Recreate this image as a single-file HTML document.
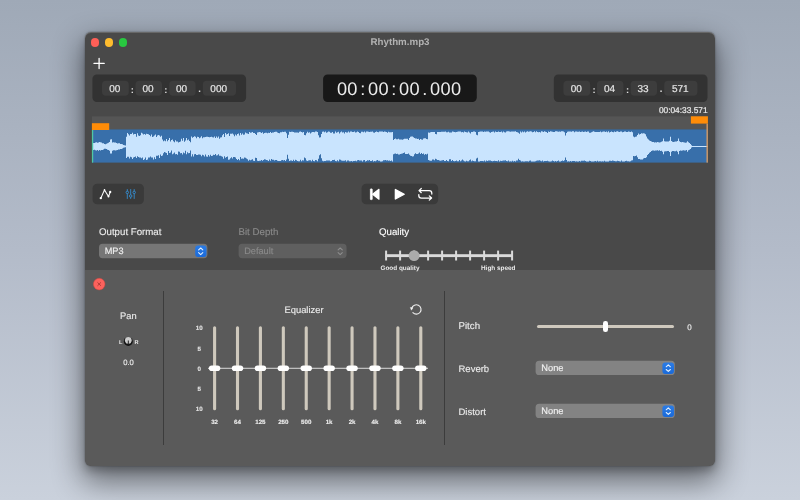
<!DOCTYPE html>
<html><head><meta charset="utf-8"><title>Rhythm.mp3</title>
<style>
*{box-sizing:border-box;margin:0;padding:0}
html,body{width:800px;height:500px;overflow:hidden}
body{font-family:"Liberation Sans",sans-serif;color:#e6e6e6;position:relative;text-rendering:geometricPrecision;
background:linear-gradient(180deg,#9fa9b7 0%,#b3bbc9 50%,#cad1dc 100%);}
.abs,.win div,.win svg{position:absolute}
.shadow{position:absolute;left:85px;top:32px;width:630px;height:434px;border-radius:6px;
box-shadow:0 13px 30px 3px rgba(0,0,0,.48),0 5px 9px rgba(0,0,0,.22),0 0 1.5px rgba(0,0,0,.5)}
.win{position:absolute;left:0;top:0;width:800px;height:500px;will-change:transform}
.wbg{left:85px;top:32px;width:630px;height:434px;border-radius:6px;background:#494949;overflow:hidden;
box-shadow:inset 0 1px 0 rgba(255,255,255,.17)}
.panel{left:0;top:238px;width:630px;height:196px;background:#5a5a5a}
.tl{width:8.8px;height:8.8px;border-radius:50%;top:38px}
.title{left:300px;width:200px;top:37.3px;text-align:center;font-size:9.75px;font-weight:bold;color:#b2b2b2;line-height:12px}
.tbox{top:74.4px;width:153.5px;height:27.5px}
.tf{top:6.7px;height:14.9px;color:#e4e4e4;font-size:10px;line-height:17.1px;text-align:center;padding-right:1px;-webkit-text-stroke:.2px #e4e4e4}
.ts{top:10.2px;width:6px;text-align:center;color:#e0e0e0;font-size:9.4px;font-weight:bold;line-height:10px}
.big{left:323.3px;top:74.5px;width:153.7px;height:27.5px;color:#ececec;font-size:18.2px;line-height:28.4px;text-align:center;letter-spacing:.35px;word-spacing:-3.05px;white-space:pre;padding-right:2px}
.dur{left:600px;width:107.6px;top:105.2px;text-align:right;font-size:8.35px;color:#ececec;line-height:10px;-webkit-text-stroke:.2px #ececec}
.band{left:92px;top:116px;width:616px;height:14px;background:#555}
.wave{left:92px;top:130px;width:616px;height:32.5px;background:#3a6fb2}
.tb{top:183.6px;height:20.7px;border-radius:4.5px;background:#3a3a3a}
.lab{font-size:9.7px;line-height:12px;color:#ececec;white-space:nowrap;-webkit-text-stroke:.12px currentColor}
.sel{height:14px;border-radius:3.5px;font-size:9.2px;line-height:15.6px;padding-left:5.7px;-webkit-text-stroke:.15px currentColor;color:#f0f0f0;white-space:nowrap}
.selb{width:11.5px;height:12px;border-radius:3px;background:#2a74dc;right:1px;top:1px}
.qt{top:250.4px;width:2px;height:10.3px;background:#dadada}
.ql{font-size:6.4px;font-weight:bold;line-height:9px;color:#ededed;top:263.8px;white-space:nowrap}
.div{width:1px;top:291px;height:154px;background:#3c3c3c}
.eqt{top:326.5px;width:3px;height:84px;border-radius:1.5px;background:#cfc9be}
.eqk{top:365.3px;width:11.4px;height:6px;border-radius:3px;background:#fff}
.eql{top:417.7px;width:30px;text-align:center;-webkit-text-stroke:.12px currentColor;font-size:6.2px;font-weight:bold;line-height:9px;color:#eee}
.eqs{left:189.3px;width:20px;text-align:center;-webkit-text-stroke:.12px currentColor;font-size:6.2px;font-weight:bold;line-height:10px;color:#e4e4e4}
</style></head><body>
<div class="shadow"></div>
<div class="win">
<div class="wbg"><div class="panel"></div></div>
<div class="tl" style="left:90.6px;background:#fe5f57"></div>
<div class="tl" style="left:104.6px;background:#febc2e"></div>
<div class="tl" style="left:118.6px;background:#28c840"></div>
<div class="title">Rhythm.mp3</div>
<svg style="left:92px;top:56px" width="14" height="14" viewBox="0 0 14 14"><path d="M7.1 2.3V12.5M2 7.4H12.2" stroke="#fff" stroke-width="1.3" fill="none" stroke-linecap="round"/></svg>
<svg style="left:0;top:0" width="800" height="500" viewBox="0 0 800 500"><g fill="#323232"><rect x="92.4" y="74.5" width="153.7" height="27.5" rx="4.5"/><rect x="553.8" y="74.5" width="153.7" height="27.5" rx="4.5"/></g><rect x="323.1" y="74.5" width="153.7" height="27.5" rx="4.5" fill="#181818"/><g fill="#3d3d3d"><rect x="102.0" y="80.8" width="26.8" height="15" rx="4"/><rect x="135.5" y="80.8" width="26.5" height="15" rx="4"/><rect x="169.2" y="80.8" width="26.4" height="15" rx="4"/><rect x="202.8" y="80.8" width="33.2" height="15" rx="4"/><rect x="563.4" y="80.8" width="26.8" height="15" rx="4"/><rect x="596.9" y="80.8" width="26.5" height="15" rx="4"/><rect x="630.6" y="80.8" width="26.4" height="15" rx="4"/><rect x="664.2" y="80.8" width="33.2" height="15" rx="4"/></g></svg>
<div class="tbox" style="left:92.2px"><div class="tf" style="left:9.5px;width:27px">00</div><div class="tf" style="left:43.0px;width:26.5px">00</div><div class="tf" style="left:76.5px;width:26.5px">00</div><div class="tf" style="left:110.5px;width:33px">000</div><div class="ts" style="left:37.2px">:</div><div class="ts" style="left:70.7px">:</div><div class="ts" style="left:104.3px;top:11px;font-size:9.5px">.</div></div>
<div class="big">00 : 00 : 00 . 000</div>
<div class="tbox" style="left:553.8px"><div class="tf" style="left:9.5px;width:27px">00</div><div class="tf" style="left:43.0px;width:26.5px">04</div><div class="tf" style="left:76.5px;width:26.5px">33</div><div class="tf" style="left:110.5px;width:33px">571</div><div class="ts" style="left:37.2px">:</div><div class="ts" style="left:70.7px">:</div><div class="ts" style="left:104.3px;top:11px;font-size:9.5px">.</div></div>
<div class="dur">00:04:33.571</div>
<svg style="left:0;top:0" width="800" height="500" viewBox="0 0 800 500">
<rect x="92" y="116.4" width="616" height="13.2" fill="#555"/>
<rect x="92" y="129.4" width="616" height="33.2" fill="#386faa"/>
<path transform="translate(92 130.1)" d="M0 12.8V12.8H1V12.9H2V13H3V12.5H4V12.2H5V12.6H6V12.3H7V12H8V12.1H9V12.3H10V13.2H11V13.1H12V13.8H13V14.2H14V13.6H15V13.2H16V12.7H17V12H18V9.4H19V9.2H20V12.4H21V12.1H22V12.3H23V12.4H24V12.8H25V13.4H26V13.2H27V13.2H28V13.9H29V14H30V14.2H31V14.9H32V15.2H33V15.4H34V6.7H35V3H36V4.2H37V5.4H38V3.8H39V3.8H40V2.6H41V4.5H42V4H43V4H44V6.7H45V3.2H46V5.5H47V5.8H48V5.2H49V2.6H50V3.4H51V4.5H52V3.9H53V4.6H54V3.6H55V3.8H56V4.2H57V5H58V6.2H59V4.3H60V6.8H61V6.5H62V5.4H63V4.4H64V6.9H65V5.4H66V5H67V5.3H68V6.7H69V5.7H70V9.5H71V11.1H72V10.3H73V11.2H74V9H75V11.1H76V9.8H77V7.8H78V11.3H79V9.9H80V9.5H81V11.2H82V12.1H83V10.1H84V11.5H85V11.5H86V12.5H87V11.9H88V11.3H89V8.6H90V10.7H91V8H92V11.6H93V10.3H94V8H95V10.2H96V9.4H97V11H98V12.2H99V6.3H100V7.6H101V6.9H102V6.2H103V6.6H104V8.2H105V6.6H106V7H107V8.1H108V7.5H109V6.2H110V8.2H111V7.1H112V7.1H113V6.9H114V6.6H115V6.6H116V6.9H117V7.2H118V6.8H119V6.6H120V7.1H121V7.3H122V6.5H123V7.8H124V6.3H125V7.6H126V6.5H127V8.7H128V7.3H129V7.1H130V5.2H131V3.9H132V6.8H133V3H134V4.3H135V4H136V3.1H137V6H138V3.6H139V3.6H140V3.4H141V4.3H142V6.2H143V4.3H144V5.4H145V4H146V3.5H147V5.5H148V2.9H149V4.6H150V3.4H151V4.7H152V4.4H153V2.4H154V3.2H155V3.4H156V3.9H157V1.9H158V2.6H159V2.4H160V2H161V3H162V3H163V3.8H164V4.8H165V2.4H166V2.2H167V1.9H168V2.1H169V2.9H170V2.2H171V3.7H172V2.8H173V2.6H174V2.6H175V3.2H176V2.6H177V3H178V1.9H179V3H180V2.4H181V2.5H182V1.8H183V1.7H184V1.6H185V2.5H186V3H187V3.1H188V2.2H189V2.2H190V1.6H191V1.8H192V1.7H193V1.6H194V3.2H195V8H196V4.7H197V1.6H198V1.8H199V1.6H200V1.6H201V2H202V2.5H203V2.4H204V2.3H205V2.5H206V2.6H207V1.6H208V1.5H209V1.8H210V2.5H211V1.8H212V4.9H213V5.1H214V3.2H215V1.7H216V2.7H217V2.2H218V3.3H219V2.3H220V1.8H221V1.8H222V2.2H223V1.5H224V1.5H225V2H226V5.1H227V7.5H228V7.1H229V3.9H230V1.7H231V1.5H232V2.2H233V1.4H234V2.7H235V2.1H236V1.5H237V1.6H238V2.7H239V2.6H240V1.8H241V3.5H242V3.4H243V1.4H244V2.7H245V2.2H246V1.6H247V3.3H248V2.2H249V1.3H250V2.4H251V2.1H252V3.3H253V2H254V2.5H255V2.3H256V1.5H257V2.5H258V1.4H259V1.5H260V1.9H261V2H262V1.3H263V2.5H264V2.2H265V1.4H266V1.9H267V2.9H268V3.1H269V1.6H270V1.6H271V2.1H272V1.5H273V2.4H274V1.4H275V1.3H276V1.7H277V1.8H278V1.6H279V1.6H280V1.5H281V2.3H282V2.6H283V1.8H284V1.4H285V2H286V2.1H287V1.3H288V1.4H289V1.4H290V1.3H291V1.9H292V1.4H293V1.6H294V2H295V2.6H296V1.6H297V2.1H298V2.2H299V2.2H300V1.8H301V9.8H302V9H303V8.5H304V9.2H305V9.2H306V8.7H307V9.5H308V9.3H309V9.5H310V9.6H311V9.2H312V8.7H313V8.7H314V8.6H315V8.6H316V9.8H317V7.9H318V6.7H319V6.3H320V6.3H321V7.2H322V7.8H323V8.4H324V8.5H325V8.8H326V8.7H327V10H328V8.8H329V9.5H330V9.6H331V8.4H332V8.1H333V8.1H334V8.9H335V9.1H336V2.4H337V2.6H338V2.2H339V1.8H340V1.8H341V1.8H342V2H343V3.9H344V4.2H345V1.8H346V1.9H347V1.9H348V1.9H349V1.7H350V1.6H351V1.6H352V1.6H353V1.5H354V2.2H355V2.1H356V1.7H357V2.5H358V2.5H359V2.3H360V1.5H361V1.6H362V1.8H363V2.1H364V1.8H365V1.6H366V1.4H367V1.4H368V1.5H369V2.2H370V2H371V2.4H372V1.4H373V2H374V2.2H375V2.4H376V1.4H377V2.4H378V3.5H379V1.8H380V1.8H381V1.3H382V1.3H383V1.9H384V4.7H385V5.2H386V1.8H387V1.6H388V1.5H389V1.4H390V1.4H391V1.8H392V1.3H393V1.6H394V1.3H395V1.4H396V1.3H397V2.1H398V2.6H399V2H400V1.6H401V1.4H402V2.3H403V1.3H404V1.9H405V1.9H406V1.5H407V1.9H408V1.8H409V1.3H410V2.3H411V1.5H412V2.1H413V2.4H414V1.5H415V1.2H416V1.2H417V1.3H418V1.6H419V1.3H420V1.3H421V1.4H422V1.5H423V1.2H424V1.9H425V2.2H426V2.7H427V3.6H428V1.5H429V2.3H430V1.4H431V2.2H432V1.3H433V2.3H434V1.7H435V1.2H436V1.7H437V1.5H438V1.2H439V1.3H440V2.1H441V2H442V1.2H443V2.1H444V1.2H445V2H446V2.1H447V1.8H448V2.3H449V1.2H450V1.3H451V1.8H452V1.2H453V1.6H454V1.9H455V2.9H456V1.3H457V2H458V1.2H459V1.3H460V1.7H461V1.8H462V1.8H463V1.2H464V1.2H465V1.3H466V1.7H467V1.5H468V1.6H469V1.2H470V1.2H471V1.4H472V2.1H473V5.3H474V2.8H475V1.7H476V1.4H477V1.5H478V1.3H479V1.7H480V1.2H481V1.1H482V2.1H483V1.5H484V1.5H485V1.6H486V1.6H487V1.3H488V1.8H489V1.6H490V1.4H491V1.8H492V1.6H493V1.3H494V1.9H495V1.4H496V1.3H497V2.6H498V2.6H499V2.1H500V1.6H501V1.2H502V1.6H503V1.8H504V1.8H505V1.9H506V1.9H507V1.8H508V1.3H509V2.1H510V1.7H511V1.3H512V1.5H513V2H514V1.3H515V2.1H516V1.2H517V2.4H518V1.9H519V1.5H520V1.9H521V2.1H522V1.5H523V2H524V1.3H525V1.2H526V1.7H527V1.9H528V1.5H529V1.5H530V2.1H531V1.9H532V1.3H533V1.3H534V2H535V1.8H536V1.5H537V1.7H538V1.9H539V1.5H540V2.2H541V6.5H542V7.2H543V6.7H544V6.4H545V5H546V3.4H547V4.4H548V3.9H549V3.2H550V3.5H551V3.2H552V3.3H553V4.1H554V6.5H555V8.3H556V9.5H557V10.4H558V10.8H559V11.3H560V11.8H561V12H562V12.3H563V12.1H564V12.4H565V11.9H566V12.1H567V12.3H568V12.1H569V11.7H570V11.1H571V8.4H572V11.1H573V11.4H574V11.4H575V11.4H576V11.4H577V10.6H578V6.7H579V10.8H580V11.6H581V11.8H582V11.7H583V11.5H584V11.5H585V11H586V8.4H587V11.2H588V11.8H589V12.2H590V12H591V12.1H592V12.3H593V12.7H594V12.4H595V11.1H596V12.1H597V13H598V13.9H599V15.2H600V15.8H601V15.8H602V15.8H603V15.8H604V15.8H605V15.8H606V15.8H607V15.8H608V15.8H609V15.8H610V15.8H611V15.8H612V15.8H613V15.8H614V15.8H615V15.8H616V16.8H615V16.8H614V16.8H613V16.8H612V16.8H611V16.8H610V16.8H609V16.8H608V16.8H607V16.8H606V16.8H605V16.8H604V16.8H603V16.8H602V16.8H601V16.8H600V17.4H599V18.8H598V19.6H597V20.2H596V21.6H595V19.9H594V20.3H593V20.4H592V20.2H591V20.3H590V20.7H589V20.4H588V21H587V24.2H586V21.6H585V20.7H584V21.2H583V21.1H582V20.9H581V20.9H580V21.6H579V25.9H578V21.9H577V20.8H576V20.8H575V21.2H574V21.2H573V21.5H572V24.2H571V21.7H570V20.6H569V20.9H568V20.2H567V20.6H566V20.1H565V20.3H564V20.5H563V20.6H562V20.3H561V20.5H560V20.9H559V22H558V22.6H557V23.9H556V24.8H555V27.1H554V27.8H553V27.9H552V28.5H551V29.4H550V29.3H549V29.3H548V28.9H547V29H546V27.1H545V25.3H544V25.9H543V26.1H542V25.8H541V30.2H540V30.4H539V31.2H538V31.3H537V31.1H536V31.1H535V30.6H534V30.9H533V31.3H532V31.3H531V31.4H530V30.4H529V31.3H528V31.1H527V31H526V30.6H525V31.2H524V31.2H523V30.8H522V30.6H521V30.5H520V30.8H519V30.6H518V30.7H517V31.3H516V31.4H515V31.3H514V31.3H513V30.6H512V31.4H511V31.2H510V31.4H509V31.2H508V31.2H507V31.3H506V30.6H505V31.4H504V31H503V31.1H502V31.5H501V31.5H500V31.4H499V30.8H498V30.7H497V31.4H496V31.3H495V31.4H494V31H493V30.5H492V30.6H491V30.7H490V30.7H489V31.3H488V31H487V31.5H486V31.3H485V31.1H484V31.4H483V30.9H482V30.8H481V31H480V31.5H479V30.8H478V31.5H477V31.1H476V31.5H475V29.9H474V27.3H473V30.1H472V31H471V30.5H470V30.9H469V31.4H468V31.4H467V30.4H466V30.9H465V31.5H464V30.9H463V31.4H462V31H461V30.5H460V31.1H459V31.3H458V31.4H457V31.2H456V30.6H455V30.9H454V30.9H453V30.8H452V31.4H451V30.5H450V31.1H449V30.7H448V30.2H447V30.5H446V30.4H445V30.6H444V31.1H443V31.4H442V31.4H441V31.4H440V31.4H439V30.5H438V30.6H437V31.3H436V31.2H435V31.2H434V31.1H433V31.4H432V31.3H431V31.1H430V31.3H429V30.5H428V30H427V28.7H426V30.5H425V30.5H424V31.4H423V31H422V31.3H421V30.7H420V31.4H419V31.1H418V31.3H417V30.4H416V31.2H415V30.8H414V30.1H413V30.4H412V30.3H411V30.6H410V30.9H409V30.6H408V31.3H407V30.2H406V31.1H405V31H404V30.9H403V30.7H402V30.9H401V31.2H400V30.9H399V30.4H398V30.4H397V30.4H396V30.8H395V30.3H394V31.3H393V30.3H392V31.1H391V31H390V30.8H389V31H388V31.3H387V31.3H386V27.7H385V28.3H384V31.2H383V31.2H382V30.9H381V30.5H380V31.1H379V29.3H378V30.2H377V31.2H376V31.1H375V30.6H374V31.3H373V31.2H372V30.4H371V29.3H370V30.4H369V31.2H368V29.9H367V31.1H366V31.1H365V30.3H364V30.8H363V31.1H362V30.8H361V30H360V30.8H359V29.2H358V29.1H357V31.1H356V31H355V30H354V31H353V30.9H352V29.9H351V30.2H350V30.5H349V30.7H348V30.4H347V29.9H346V29.9H345V29.2H344V28.6H343V30.1H342V29.5H341V29.5H340V30.7H339V30.6H338V30.3H337V30H336V23.7H335V24.4H334V24H333V24.7H332V23.4H331V23.8H330V23H329V23.8H328V22.4H327V23.3H326V23.9H325V23.9H324V23.1H323V24.2H322V26.1H321V26.5H320V26H319V25.6H318V24.7H317V23.4H316V23.9H315V24H314V23.9H313V22.4H312V22.8H311V23.4H310V23.7H309V23.9H308V24.3H307V24.3H306V23.7H305V23.9H304V23.5H303V23.6H302V24.2H301V31.3H300V30.3H299V30.9H298V30.5H297V30.6H296V30.2H295V30.5H294V30H293V30.2H292V30.2H291V31.1H290V31.3H289V31.3H288V30.7H287V30.7H286V29.8H285V30.4H284V31.2H283V31H282V31.3H281V30.1H280V30.9H279V30.8H278V29.9H277V30.4H276V30.1H275V30.8H274V31.3H273V30H272V30.2H271V31.3H270V30.5H269V30.4H268V30.5H267V30H266V30.2H265V31.1H264V30.6H263V30.9H262V30.8H261V31.3H260V31H259V31.2H258V31.2H257V30.4H256V30.4H255V31.3H254V30.2H253V30.6H252V30.7H251V30.7H250V30.3H249V29.6H248V29.3H247V31.1H246V30.2H245V31.1H244V31H243V29.7H242V29.8H241V30H240V30.9H239V31.1H238V30.4H237V30.5H236V30.4H235V30.5H234V30.9H233V30.8H232V31.1H231V30.6H230V28.1H229V24.1H228V25.1H227V28.6H226V31.1H225V30.1H224V30H223V31.1H222V30.8H221V29.7H220V31.1H219V30.1H218V30.1H217V30.5H216V30.8H215V30.4H214V28.2H213V27.4H212V30.5H211V30.2H210V31.1H209V29.6H208V31.1H207V31.1H206V30.9H205V30.1H204V29.6H203V30.9H202V29.7H201V30.8H200V30.5H199V30.3H198V31H197V28.6H196V24.7H195V29.4H194V31H193V29.9H192V30.3H191V29.9H190V30.2H189V30.9H188V31H187V30.8H186V30.7H185V29.8H184V30H183V30.3H182V29.6H181V29.6H180V29H179V30.7H178V29.4H177V30.9H176V30.1H175V29.9H174V29.5H173V29.1H172V29.8H171V30.7H170V30H169V30.6H168V30.7H167V30.8H166V30.6H165V27.9H164V27.7H163V30.9H162V30.6H161V29.2H160V29.7H159V30.2H158V29.7H157V30.6H156V29.1H155V28.4H154V27.7H153V27.4H152V28.6H151V28.3H150V28.7H149V26.9H148V30.1H147V29H146V29.9H145V29H144V27.4H143V27H142V27H141V28.5H140V27.1H139V28.2H138V29.4H137V29.6H136V26.5H135V26.9H134V27.7H133V26.1H132V28.6H131V26.7H130V26.2H129V25.7H128V25.7H127V24.1H126V25.1H125V25.4H124V23.9H123V24.8H122V24.6H121V25.6H120V26H119V24.7H118V26.3H117V24.8H116V26.6H115V26.3H114V24.4H113V26.3H112V25.1H111V24.7H110V26.1H109V24.7H108V24.4H107V24.4H106V25H105V25H104V24H103V24.1H102V26.5H101V24.2H100V26.3H99V20.4H98V22.8H97V23.2H96V22.1H95V24.2H94V20.7H93V23.1H92V22.3H91V24.3H90V22.8H89V23.2H88V21.6H87V21.4H86V24.6H85V23.8H84V24.1H83V22.5H82V23.3H81V24.2H80V20.5H79V22.4H78V22.8H77V20.8H76V24.9H75V22.8H74V22.5H73V21.8H72V23.1H71V25.3H70V25.9H69V24.5H68V28H67V25.2H66V25.6H65V25.7H64V28.8H63V27.1H62V29.4H61V27.3H60V27.4H59V26.5H58V27.5H57V27.3H56V29.5H55V30H54V27.4H53V29.2H52V29.9H51V27.4H50V28.2H49V27.4H48V27.3H47V27H46V26.1H45V27.9H44V26.3H43V26.9H42V27.3H41V29H40V27.2H39V26.7H38V28.4H37V26.7H36V26.6H35V27.8H34V17.2H33V17.4H32V17.7H31V18.4H30V18.8H29V18.8H28V19.4H27V19.5H26V19.8H25V20.1H24V20.3H23V20.1H22V20.1H21V20.7H20V23.5H19V23.5H18V20.6H17V20H16V19.7H15V18.8H14V18.6H13V18.7H12V19.4H11V19.9H10V19.9H9V20.3H8V19.9H7V20.6H6V20H5V20.4H4V20.1H3V19.6H2V20H1V19.7H0Z" fill="#c9e4fe"/>
<rect x="91.9" y="123.2" width="17.3" height="6.8" fill="#ff8c08"/>
<rect x="91.9" y="130" width="1.3" height="32.6" fill="#4fc9a4"/>
<rect x="690.9" y="116.3" width="17" height="7.3" fill="#ff8c08"/>
<rect x="706.5" y="123.6" width="1.35" height="39" fill="#d99a5e"/>
</svg>

<svg style="left:0;top:0" width="800" height="500" viewBox="0 0 800 500">
<rect x="92.6" y="183.8" width="51.3" height="20.4" rx="4.5" fill="#3a3a3a"/>
<rect x="361.6" y="183.8" width="76.5" height="20.4" rx="4.5" fill="#3a3a3a"/>
<g fill="#fff" stroke="#fff" stroke-linejoin="round">
<rect x="370.4" y="188.9" width="1.8" height="10.7" rx=".4" stroke-width=".8"/>
<path d="M379 189.3V199.2L372.6 194.25Z" stroke-width="1.1"/>
<path d="M395.4 189.5V199L404.2 194.25Z" stroke-width="1.4"/>
</g>
<g stroke="#fff" stroke-width="1.25" fill="none" stroke-linecap="round" stroke-linejoin="round">
<path d="M431.8 194V193.2a2.6 2.6 0 0 0-2.6-2.6H419.2M421.3 188.5L419 190.6L421.3 192.7"/>
<path d="M418.8 194.6V195.4a2.6 2.6 0 0 0 2.6 2.6H431.4M429.3 195.9L431.6 198L429.3 200.1"/>
</g>
<path d="M100.8 198.2L104.5 189.9L108.5 196.6L110.2 192" stroke="#fff" stroke-width="1.05" fill="none" stroke-linejoin="round" stroke-linecap="round"/>
<circle cx="100.8" cy="198.2" r="1.15" fill="#fff"/><circle cx="110.2" cy="192" r="1.15" fill="#fff"/><circle cx="108.5" cy="196.6" r="1" fill="#fff"/><circle cx="104.5" cy="189.9" r=".8" fill="#fff"/>
<g stroke="#3591d6" stroke-width=".85" fill="none"><path d="M127.3 189.1V198.9M130.7 189.1V198.9M134.2 189.1V198.9"/></g>
<g fill="#3a3a3a" stroke="#3591d6" stroke-width=".85"><circle cx="127.3" cy="192.4" r="1.25"/><circle cx="130.7" cy="196" r="1.25"/><circle cx="134.2" cy="192.4" r="1.25"/></g>
</svg>


<svg style="left:0;top:0" width="800" height="500" viewBox="0 0 800 500"><defs><linearGradient id="bg" x1="0" y1="0" x2="0" y2="1"><stop offset="0" stop-color="#2b7ce6"/><stop offset="1" stop-color="#1a6ad9"/></linearGradient></defs><rect x="99" y="243.8" width="108.4" height="14.4" rx="3.6" fill="#767676"/><rect x="195.2" y="245.5" width="11.3" height="11.4" rx="2.9" fill="url(#bg)"/><path d="M198.60 249.95L200.70 248.00L202.80 249.95M198.60 252.65L200.70 254.60L202.80 252.65" stroke="#e4f1ff" stroke-width="1.05" fill="none" stroke-linecap="round" stroke-linejoin="round"/><rect x="238.6" y="243.8" width="108" height="14.4" rx="3.6" fill="#5f5f5f"/><path d="M338.10 249.95L340.20 248.00L342.30 249.95M338.10 252.65L340.20 254.60L342.30 252.65" stroke="#8e8e8e" stroke-width="1.05" fill="none" stroke-linecap="round" stroke-linejoin="round"/><rect x="535.6" y="360.8" width="139.2" height="14.3" rx="3.6" fill="#838383"/><rect x="662.4" y="362.4" width="11.6" height="11.5" rx="2.9" fill="url(#bg)"/><path d="M666.20 366.80L668.30 364.85L670.40 366.80M666.20 369.50L668.30 371.45L670.40 369.50" stroke="#e4f1ff" stroke-width="1.05" fill="none" stroke-linecap="round" stroke-linejoin="round"/><rect x="535.6" y="403.8" width="139.2" height="14.3" rx="3.6" fill="#838383"/><rect x="662.4" y="405.4" width="11.6" height="11.5" rx="2.9" fill="url(#bg)"/><path d="M666.20 409.80L668.30 407.85L670.40 409.80M666.20 412.50L668.30 414.45L670.40 412.50" stroke="#e4f1ff" stroke-width="1.05" fill="none" stroke-linecap="round" stroke-linejoin="round"/></svg>
<div class="lab" style="left:99px;top:227.4px">Output Format</div>
<div class="sel" style="left:99px;top:244px;width:108.5px">MP3</div>
<div class="lab" style="left:238.5px;top:227.4px;color:#8a8a8a">Bit Depth</div>
<div class="sel" style="left:238.5px;top:244px;width:108px;color:#8a8a8a">Default</div>
<div class="lab" style="left:379px;top:227.4px;color:#fff">Quality</div>
<svg style="left:0;top:0" width="800" height="500" viewBox="0 0 800 500"><g fill="#dadada"><rect x="385.10" y="250.6" width="2" height="9.9"/><rect x="399.10" y="250.6" width="2" height="9.9"/><rect x="413.10" y="250.6" width="2" height="9.9"/><rect x="427.10" y="250.6" width="2" height="9.9"/><rect x="441.10" y="250.6" width="2" height="9.9"/><rect x="455.10" y="250.6" width="2" height="9.9"/><rect x="469.10" y="250.6" width="2" height="9.9"/><rect x="483.10" y="250.6" width="2" height="9.9"/><rect x="497.10" y="250.6" width="2" height="9.9"/><rect x="511.10" y="250.6" width="2" height="9.9"/><rect x="385.5" y="254.2" width="127.5" height="2.9"/></g><circle cx="414.1" cy="255.65" r="5.4" fill="#ababab"/></svg>
<div class="ql" style="left:380.5px">Good quality</div>
<div class="ql" style="left:481px">High speed</div>

<svg style="left:0;top:0" width="800" height="500" viewBox="0 0 800 500"><circle cx="99.2" cy="284.1" r="5.8" fill="#fc625d" stroke="#d9463f" stroke-width=".5"/><path d="M97.8 282.7L100.6 285.5M100.6 282.7L97.8 285.5" stroke="#8e2a26" stroke-width=".85" stroke-linecap="round" opacity=".85"/></svg>
<div class="div" style="left:163px"></div>
<div class="div" style="left:444px"></div>
<div class="lab" style="left:98.3px;width:60px;text-align:center;top:310.4px;font-size:9.3px">Pan</div>
<svg style="left:0;top:0" width="800" height="500" viewBox="0 0 800 500"><circle cx="128.3" cy="341.4" r="4.5" fill="#141414"/><circle cx="128.3" cy="340.3" r="3.35" fill="#cdcdcd"/><path d="M128.3 340.6V344.6" stroke="#2a2a2a" stroke-width="1.1"/><path d="M126.6 341V343.2M130 341V343.2" stroke="#c9c9c9" stroke-width="1.2"/></svg>
<div class="ql" style="left:119px;top:338.8px;font-size:5.6px">L</div>
<div class="ql" style="left:134.6px;top:338.8px;font-size:5.6px">R</div>
<div class="lab" style="left:98.5px;width:60px;text-align:center;top:356.7px;font-size:7.7px">0.0</div>

<div class="lab" style="left:254px;width:100px;text-align:center;top:303.6px;font-size:9.4px">Equalizer</div>
<svg style="left:0;top:0" width="800" height="500" viewBox="0 0 800 500"><path d="M412.9 312.7A4.7 4.7 0 1 0 411.8 308.2" stroke="#ededed" stroke-width="1.15" fill="none" stroke-linecap="round"/><path d="M410.3 307.4L413 307.8L411.4 310.2Z" fill="#f4f4f4" stroke="#f4f4f4" stroke-width=".4" stroke-linejoin="round"/></svg>
<div class="eqs" style="top:324.2px">10</div>
<div class="eqs" style="top:344.7px">5</div>
<div class="eqs" style="top:364.7px">0</div>
<div class="eqs" style="top:385.2px">5</div>
<div class="eqs" style="top:405.2px">10</div>

<svg style="left:0;top:0" width="800" height="500" viewBox="0 0 800 500"><rect x="208" y="367.75" width="220" height="1.1" fill="#cfcfcf"/><rect x="213.05" y="326.3" width="3.1" height="84" rx="1.5" fill="#cfc9bd"/><rect x="208.90" y="365.5" width="11.4" height="5.6" rx="2.8" fill="#fff"/><rect x="235.96" y="326.3" width="3.1" height="84" rx="1.5" fill="#cfc9bd"/><rect x="231.81" y="365.5" width="11.4" height="5.6" rx="2.8" fill="#fff"/><rect x="258.87" y="326.3" width="3.1" height="84" rx="1.5" fill="#cfc9bd"/><rect x="254.72" y="365.5" width="11.4" height="5.6" rx="2.8" fill="#fff"/><rect x="281.78" y="326.3" width="3.1" height="84" rx="1.5" fill="#cfc9bd"/><rect x="277.63" y="365.5" width="11.4" height="5.6" rx="2.8" fill="#fff"/><rect x="304.69" y="326.3" width="3.1" height="84" rx="1.5" fill="#cfc9bd"/><rect x="300.54" y="365.5" width="11.4" height="5.6" rx="2.8" fill="#fff"/><rect x="327.60" y="326.3" width="3.1" height="84" rx="1.5" fill="#cfc9bd"/><rect x="323.45" y="365.5" width="11.4" height="5.6" rx="2.8" fill="#fff"/><rect x="350.51" y="326.3" width="3.1" height="84" rx="1.5" fill="#cfc9bd"/><rect x="346.36" y="365.5" width="11.4" height="5.6" rx="2.8" fill="#fff"/><rect x="373.42" y="326.3" width="3.1" height="84" rx="1.5" fill="#cfc9bd"/><rect x="369.27" y="365.5" width="11.4" height="5.6" rx="2.8" fill="#fff"/><rect x="396.33" y="326.3" width="3.1" height="84" rx="1.5" fill="#cfc9bd"/><rect x="392.18" y="365.5" width="11.4" height="5.6" rx="2.8" fill="#fff"/><rect x="419.24" y="326.3" width="3.1" height="84" rx="1.5" fill="#cfc9bd"/><rect x="415.09" y="365.5" width="11.4" height="5.6" rx="2.8" fill="#fff"/></svg>
<div class="eql" style="left:199.6px">32</div>
<div class="eql" style="left:222.5px">64</div>
<div class="eql" style="left:245.4px">125</div>
<div class="eql" style="left:268.3px">250</div>
<div class="eql" style="left:291.2px">500</div>
<div class="eql" style="left:314.1px">1k</div>
<div class="eql" style="left:337.1px">2k</div>
<div class="eql" style="left:360.0px">4k</div>
<div class="eql" style="left:382.9px">8k</div>
<div class="eql" style="left:405.8px">16k</div>


<div class="lab" style="left:458.5px;top:321.3px;font-size:9.7px">Pitch</div>
<div style="left:537px;top:325px;width:137px;height:3px;border-radius:1.5px;background:#cfc9be"></div>
<div style="left:603px;top:320.7px;width:4.6px;height:11.4px;border-radius:2.3px;background:#fff"></div>
<div class="lab" style="left:687.3px;top:322px;font-size:8px;color:#f0f0f0">0</div>
<div class="lab" style="left:458.5px;top:363.6px;font-size:9.5px">Reverb</div>
<div class="sel" style="left:535.6px;top:361px;width:139px;font-size:9.3px;line-height:14.6px">None</div>
<div class="lab" style="left:458.5px;top:406.6px;font-size:9.5px">Distort</div>
<div class="sel" style="left:535.6px;top:404px;width:139px;font-size:9.3px;line-height:14.6px">None</div>
</div>
</body></html>
